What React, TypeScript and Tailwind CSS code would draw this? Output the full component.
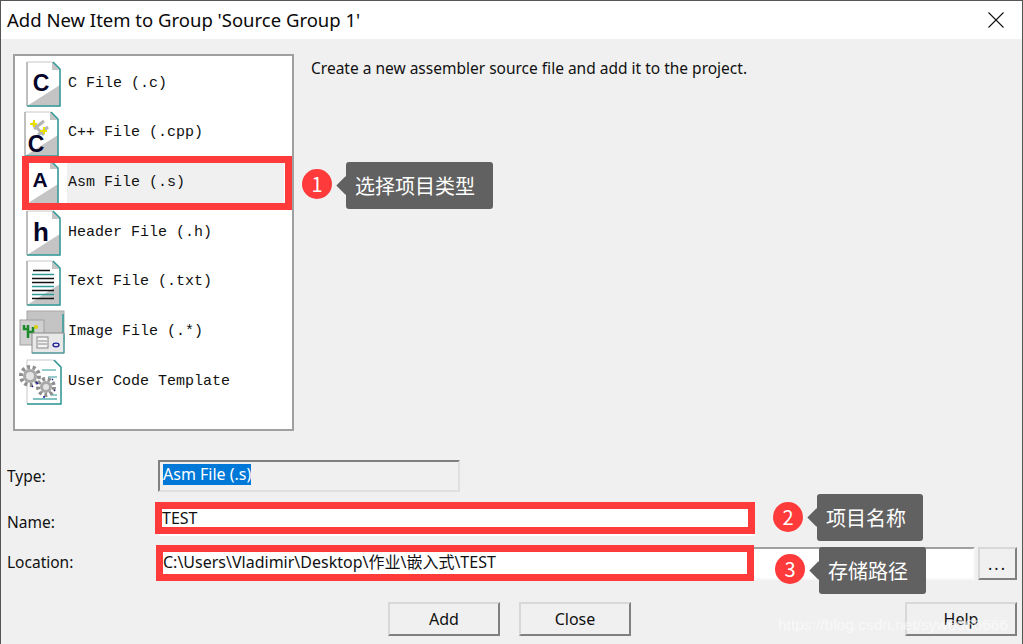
import React from "react";

const uiFont = "font-['Noto_Sans','Noto_Sans_CJK_SC',sans-serif]";
const monoFont = "font-['Liberation_Mono','Noto_Sans_CJK_SC',monospace]";
const noteFont = "font-['Noto_Sans_CJK_SC',sans-serif]";

function Sheet({ children }: { children?: React.ReactNode }) {
  return (
    <svg width="36" height="46" viewBox="0 0 36 46" className="block">
      <path d="M1 1H26L34 9V45H1Z" fill="#fff" stroke="#c8c8c8" />
      <path d="M1 45L34 24V45Z" fill="#c4c4c4" />
      <path d="M26 1L34 9H26Z" fill="#c4c4c4" />
      <path d="M27 1L34 8V45H1" fill="none" stroke="#2f9a98" strokeWidth="1.5" />
      <path d="M1 1V45" stroke="#9a9a9a" />
      {children}
    </svg>
  );
}

function Letter({ ch, x = 15, y = 31, size = 23 }: { ch: string; x?: number; y?: number; size?: number }) {
  return (
    <text x={x} y={y} textAnchor="middle" fontSize={size} fontWeight="700" fontFamily="Liberation Sans" fill="#05052a">
      {ch}
    </text>
  );
}

function CFileIcon() {
  return (
    <Sheet>
      <Letter ch="C" y={30} />
    </Sheet>
  );
}

function CppFileIcon() {
  return (
    <Sheet>
      <path d="M8 12L20 24M20 10L10 18M24 16L14 24" stroke="#b4b4b4" strokeWidth="3" />
      <path d="M6 13h7M10 9v7M16 20h7M20 16v7" stroke="#e8e000" strokeWidth="2" />
      <Letter ch="C" x={12} y={41} />
    </Sheet>
  );
}

function AsmFileIcon() {
  return (
    <Sheet>
      <Letter ch="A" x={16} y={27} size={21} />
    </Sheet>
  );
}

function HeaderFileIcon() {
  return (
    <Sheet>
      <Letter ch="h" y={31} size={26} />
    </Sheet>
  );
}

function TextFileIcon() {
  return (
    <Sheet>
      <path d="M7 10.5H24M6 18.5H28M6 22.5H28M6 30.5H28M6 38.5H28" stroke="#111" strokeWidth="1.3" />
      <path d="M6 14.5H28M6 26.5H28M6 34.5H28" stroke="#2f9a98" strokeWidth="1.3" />
    </Sheet>
  );
}

function ImageFileIcon() {
  return (
    <svg width="46" height="44" viewBox="0 0 46 44" className="block">
      <rect x="8" y="1" width="37" height="31" fill="#c4c4c4" stroke="#a8a8a8" />
      <path d="M44 4V31H12" fill="none" stroke="#2f9a98" strokeWidth="1.5" />
      <rect x="1" y="10" width="24" height="25" fill="#d0d0d0" stroke="#a0a0a0" />
      <path d="M9 28V15M9 19H5V15M9 22H14V17" fill="none" stroke="#1a8a2a" strokeWidth="2.5" />
      <circle cx="17" cy="17" r="2" fill="#d8d000" />
      <rect x="13" y="23" width="32" height="20" fill="#e8e8e8" stroke="#8a8a8a" />
      <path d="M13 43H45V24" fill="none" stroke="#2f9a98" />
      <rect x="18" y="27" width="11" height="11" fill="#f4f4f4" stroke="#8a8a8a" />
      <path d="M19 31H28M19 34H28" stroke="#8a8a8a" />
      <ellipse cx="37" cy="35" rx="3" ry="1.8" fill="none" stroke="#1a1a9a" strokeWidth="1.3" />
    </svg>
  );
}

function Gear({ cx, cy, r }: { cx: number; cy: number; r: number }) {
  return (
    <g>
      <circle cx={cx} cy={cy} r={r + 1} fill="none" stroke="#8f8f8f" strokeWidth="4" strokeDasharray="3 2.6" />
      <circle cx={cx} cy={cy} r={r - 1} fill="#a8a8a8" />
      <circle cx={cx} cy={cy} r={r - 4} fill="#e4e4e4" />
    </g>
  );
}

function TemplateIcon() {
  return (
    <svg width="46" height="46" viewBox="0 0 46 46" className="block">
      <path d="M9 1H35L43 9V45H9Z" fill="#fff" stroke="#c8c8c8" />
      <path d="M36 1L43 8V45H9" fill="none" stroke="#2f9a98" strokeWidth="1.5" />
      <path d="M24 11H38M30 18H39M33 36H39" stroke="#2f9a98" strokeWidth="1.2" />
      <path d="M15 40H39" stroke="#2f9a98" strokeWidth="1.2" />
      <Gear cx={12} cy={17} r={8} />
      <Gear cx={28} cy={28} r={7} />
      <path d="M18 23l2 2M34 20l1 1M36 31l1 1M25 38l2 0M14 27l1 1" stroke="#1a1a9a" strokeWidth="1.5" />
    </svg>
  );
}

const items = [
  { label: "C File (.c)", icon: <CFileIcon />, inset: "pr-[5px]" },
  { label: "C++ File (.cpp)", icon: <CppFileIcon />, inset: "pr-[7px]" },
  { label: "Asm File (.s)", icon: <AsmFileIcon />, inset: "pr-[7px]", selected: true },
  { label: "Header File (.h)", icon: <HeaderFileIcon />, inset: "pr-[5px]" },
  { label: "Text File (.txt)", icon: <TextFileIcon />, inset: "pr-[5px]" },
  { label: "Image File (.*)", icon: <ImageFileIcon />, inset: "pr-[2px]" },
  { label: "User Code Template", icon: <TemplateIcon />, inset: "pr-[3px]" },
];

function Button({ label, className }: { label: string; className: string }) {
  return (
    <button
      className={`h-[34px] w-[112px] border-2 border-t-[#d8d8d8] border-l-[#d8d8d8] border-r-[#808080] border-b-[#808080] bg-[#f0f0f0] text-[16px] text-[#111] ${className}`}
    >
      {label}
    </button>
  );
}

function Note({ n, text, className, circle }: { n: number; text: string; className: string; circle: string }) {
  return (
    <>
      <div
        className={`absolute flex h-[30px] w-[30px] items-center justify-center rounded-full bg-[#fe3a3a] text-[20px] text-white ${noteFont} ${circle}`}
      >
        {n}
      </div>
      <div
        className={`absolute flex h-[47px] items-center rounded-[3px] bg-[#616161] pl-[9px] text-[20px] text-white ${noteFont} ${className}`}
      >
        <span className="absolute left-[-7px] top-[17px] h-[13px] w-[13px] rotate-45 bg-[#616161]" />
        <span className="relative">{text}</span>
      </div>
    </>
  );
}

export default function App() {
  return (
    <div className={`relative h-[644px] w-[1023px] overflow-hidden border-x border-t border-[#555] bg-[#f0f0f0] ${uiFont}`}>
      {/* Title bar */}
      <div className="flex h-[38px] items-center justify-between bg-white pl-[6px] pr-[18px]">
        <span className="text-[18.5px] text-[#0a0a0a]">Add New Item to Group 'Source Group 1'</span>
        <svg width="16" height="16" viewBox="0 0 16 16">
          <path d="M0.5 0.5L15.5 15.5M15.5 0.5L0.5 15.5" stroke="#111" strokeWidth="1.1" />
        </svg>
      </div>

      {/* List and description */}
      <div className="flex pl-[12px] pt-[15px]">
        <div className="flex h-[377px] w-[281px] flex-col border-2 border-[#a0a0a0] bg-white pl-[2px] pt-[3px]">
          {items.map((item) => (
            <div key={item.label} className="flex h-[49.7px] items-center">
              <div className={`flex w-[50px] justify-end ${item.inset}`}>{item.icon}</div>
              <div
                className={`flex h-[40px] w-[217px] items-center pl-[1px] text-[15px] text-[#111] ${monoFont} ${
                  item.selected ? "bg-[#f0f0f0]" : ""
                }`}
              >
                {item.label}
              </div>
            </div>
          ))}
        </div>
        <p className="pl-[17px] pt-[2px] text-[15.5px] leading-[24px] text-[#111]">
          Create a new assembler source file and add it to the project.
        </p>
      </div>

      {/* Form */}
      <div className="flex flex-col pl-[6px] pr-[5px] pt-[29px] text-[15.5px] text-[#111]">
        <div className="flex h-[32px] items-center">
          <span className="w-[151px] pt-[1px]">Type:</span>
          <div className="flex h-[32px] w-[302px] items-start border-2 border-b-[#e0e0e0] border-l-[#808080] border-r-[#e0e0e0] border-t-[#808080] pl-[3px] pt-[2px] text-[16px]">
            <span className="bg-[#0078d7] leading-[21px] text-white">Asm File (.s)</span>
          </div>
        </div>
        <div className="mt-[12px] flex h-[32px] items-center">
          <span className="w-[151px] pt-[6px]">Name:</span>
          <div className="flex h-[32px] w-[597px] items-center bg-white pb-[5px] pl-[4px] text-[16px]">TEST</div>
        </div>
        <div className="mt-[11px] flex h-[33px] items-center">
          <span className="w-[151px] pb-[2px]">Location:</span>
          <div className="flex h-[33px] flex-1 items-center border-2 border-b-[#f8f8f8] border-l-[#a0a0a0] border-r-[#f8f8f8] border-t-[#a0a0a0] bg-white pb-[4px] pl-[3px] text-[16px]">
            C:\Users\Vladimir\Desktop\作业\嵌入式\TEST
          </div>
          <button className="ml-[3px] h-[33px] w-[39px] border-2 border-t-[#d8d8d8] border-l-[#d8d8d8] border-r-[#808080] border-b-[#808080] text-[16px] tracking-[2px]">
            ...
          </button>
        </div>
        <div className="mt-[22px] flex pl-[381px]">
          <Button label="Add" className="border-t-[#808080] border-l-[#808080]" />
          <Button label="Close" className="ml-[19px]" />
          <Button label="Help" className="ml-[274px]" />
        </div>
      </div>

      {/* Annotations over the dialog */}
      <div className="absolute left-[21px] top-[155px] h-[54px] w-[270px] border-[7px] border-[#fe3a3a]" />
      <div className="absolute left-[154px] top-[501px] h-[32px] w-[600px] border-[7px] border-[#fe3a3a]" />
      <div className="absolute left-[155px] top-[544px] h-[36px] w-[598px] border-[7px] border-[#fe3a3a]" />

      <Note n={1} text="选择项目类型" circle="left-[301px] top-[168px]" className="left-[345px] top-[161px] w-[147px]" />
      <Note n={2} text="项目名称" circle="left-[772px] top-[501px]" className="left-[816px] top-[493px] w-[106px]" />
      <Note n={3} text="存储路径" circle="left-[774px] top-[553px]" className="left-[818px] top-[546px] w-[107px]" />

      <span className="absolute left-[777px] top-[612px] font-['Liberation_Sans',sans-serif] text-[15.5px] text-white/60">
        https://blog.csdn.net/syw6666666
      </span>
    </div>
  );
}
